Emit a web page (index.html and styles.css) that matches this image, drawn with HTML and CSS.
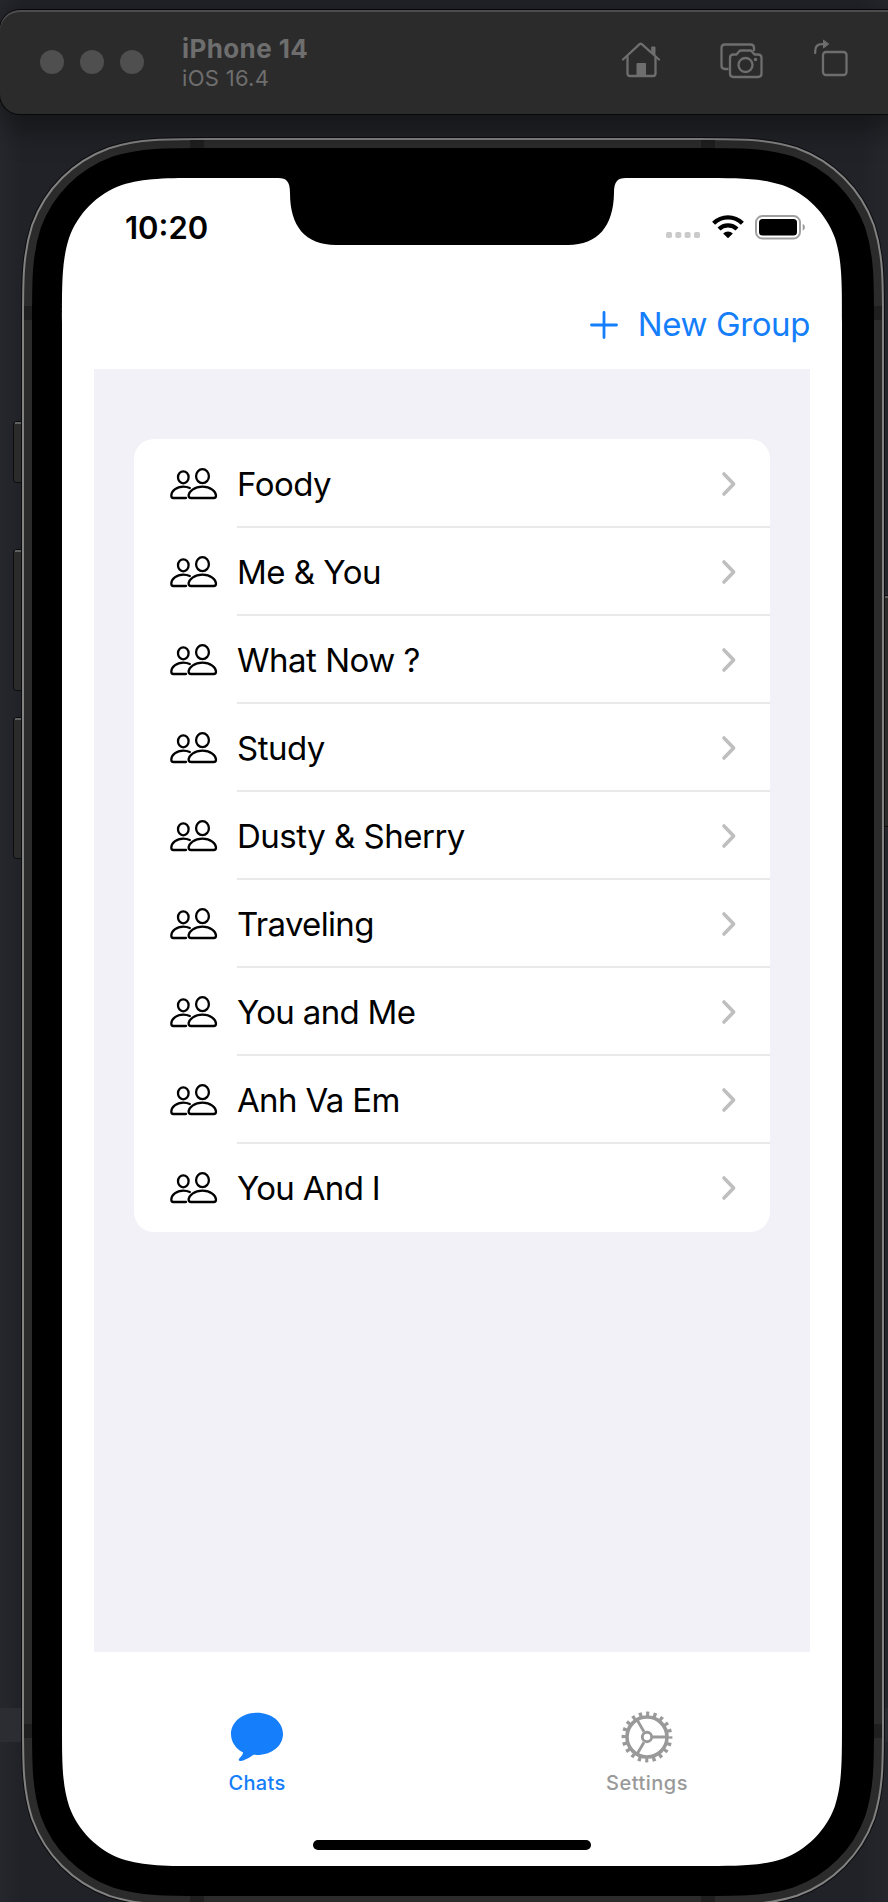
FILE: index.html
```html
<!DOCTYPE html>
<html lang="en">
<head>
<meta charset="utf-8">
<title>iPhone 14 – Chats</title>
<link rel="stylesheet" href="styles.css">
</head>
<body>
<svg class="defs" width="0" height="0" aria-hidden="true">
  <defs>
    <symbol id="people" viewBox="0 0 48 34">
      <g fill="none" stroke="#000" stroke-width="2.300" stroke-linecap="round" stroke-linejoin="round">
        <ellipse cx="13.300" cy="10.300" rx="5.300" ry="6"/>
        <ellipse cx="32.500" cy="9.200" rx="6.400" ry="7"/>
        <path d="M16 31H3.400C1.900 31 1.300 30.200 1.300 28.800C1.300 24 6.500 19.600 13.300 19.600C16 19.600 18 20.100 19.800 21"/>
        <path d="M21.200 31H43.800C45.400 31 46 30.200 46 28.800C46 24.500 40.500 19.600 32.500 19.600S18.600 24.500 18.600 28.800C18.600 30.200 19.600 31 21.200 31Z"/>
      </g>
    </symbol>
    <symbol id="chevron" viewBox="0 0 16 26">
      <path d="M3 3L12.600 13L3 23" fill="none" stroke="#bfbfbf" stroke-width="3.600" stroke-linecap="round" stroke-linejoin="round"/>
    </symbol>
  </defs>
</svg>

<header class="toolbar">
  <div class="lights"><i></i><i></i><i></i></div>
  <div class="titles">
    <h1 class="device-name">iPhone 14</h1>
    <p class="device-os">iOS 16.4</p>
  </div>
  <div class="tools">
    <svg class="home" width="40" height="36" viewBox="0 0 40 36" fill="none" stroke="#6e6e6e" stroke-width="2.300" stroke-linecap="round" stroke-linejoin="round">
      <path d="M2 17.500L18.600 2.200Q19.700 1.200 20.800 2.200L38 17.500"/>
      <path d="M6.500 15V31.500Q6.500 34 9 34H32Q34.500 34 34.500 31.500V15"/>
      <path d="M16 34V21.500H24.500V34Z" fill="#6e6e6e" stroke-width="1"/>
      <path d="M31 5H34V13L31 10Z" fill="#6e6e6e" stroke-width="1"/>
    </svg>
    <svg class="camera" width="44" height="36" viewBox="0 0 44 36" fill="none" stroke="#6e6e6e" stroke-width="2.300" stroke-linejoin="round">
      <path d="M9.500 26H6Q2.500 26 2.500 22.500V5Q2.500 1.500 6 1.500H31.500Q35 1.500 35 5V8"/>
      <path d="M14.500 11.500H17.500L20 8.500Q20.800 7.500 22 7.500H31Q32.200 7.500 33 8.500L35.500 11.500H39Q42.500 11.500 42.500 15V30.500Q42.500 34 39 34H14.500Q11 34 11 30.500V15Q11 11.500 14.500 11.500Z"/>
      <circle cx="26.500" cy="22" r="7"/>
      <circle cx="36.500" cy="16.500" r="1.700" fill="#6e6e6e" stroke="none"/>
    </svg>
    <svg class="rotate" width="36" height="38" viewBox="0 0 36 38" fill="none" stroke="#6e6e6e" stroke-width="2.300" stroke-linecap="round" stroke-linejoin="round">
      <rect x="10" y="13" width="23.500" height="23" rx="3"/>
      <path d="M2.200 14V12Q2.200 5.200 9 5.200H10.500"/>
      <path d="M10.500 1.500V9L15.500 5.200Z" fill="#6e6e6e" stroke-width="1"/>
    </svg>
  </div>
</header>

<main class="phone">
  <svg class="bezel" width="888" height="1902" viewBox="0 0 888 1902" aria-hidden="true">
    <defs>
      <path id="body" d="M62 322.800c0-41.700 0-62.500 7.100-85c8.900-24.500 28.200-43.800 52.700-52.700c22.400-7.100 43.300-7.100 85-7.100H699.200c41.700 0 62.500 0 85 7.100c24.500 8.900 43.800 28.200 52.700 52.700c7.100 22.400 7.100 43.300 7.100 85V1721.200c0 41.700 0 62.500-7.100 85c-8.900 24.500-28.200 43.800-52.700 52.700c-22.400 7.100-43.300 7.100-85 7.100H206.800c-41.700 0-62.500 0-85-7.100c-24.500-8.900-43.800-28.200-52.700-52.700c-7.100-22.400-7.100-43.300-7.100-85Z"/>
    </defs>
    <g fill="#2b2b2b" stroke="#0c0c0d">
      <rect x="13.500" y="421.500" width="14" height="61" rx="3"/>
      <rect x="13.500" y="549.500" width="14" height="141" rx="3"/>
      <rect x="13.500" y="717.500" width="14" height="141" rx="3"/>
      <rect x="878" y="595.500" width="14" height="231" rx="3"/>
    </g>
    <path d="M15 423H22M15 551H22M15 719H22M884 597H888" stroke="#606060" stroke-width="2"/>
    <use href="#body" stroke="#0e0e10" stroke-width="82"/>
    <use href="#body" stroke="#828282" stroke-width="80"/>
    <use href="#body" stroke="#2b2b2b" stroke-width="76"/>
    <path d="M190 140h14v9h-14zM701 140h14v9h-14zM24 306h9v14h-9zM873 306h9v14h-9zM24 1724h9v14h-9zM873 1724h9v14h-9zM190 1895h14v7h-14zM701 1895h14v7h-14z" fill="#1f1f1f"/>
    <use href="#body" stroke="#000" stroke-width="60"/>
    <path fill="#fff" d="M62 322.800c0-41.700 0-62.500 7.100-85c8.900-24.500 28.200-43.800 52.700-52.700c22.400-7.100 43.300-7.100 85-7.100H697.200c41.700 0 62.500 0 85 7.100c24.500 8.900 43.800 28.200 52.700 52.700c7.100 22.400 7.100 43.300 7.100 85V1721.200c0 41.700 0 62.500-7.100 85c-8.900 24.500-28.200 43.800-52.700 52.700c-22.400 7.100-43.300 7.100-85 7.100H206.800c-41.700 0-62.500 0-85-7.100c-24.500-8.900-43.800-28.200-52.700-52.700c-7.100-22.400-7.100-43.300-7.100-85Z"/>
    <path class="notch" d="M276 176V178H278C287 178 290 182 290 193C290 226 305 245 336 245H568C598 245 613.500 226 614 193C614 182 617 178 626 178V176Z"/>
  </svg>

  <div class="screen">
    <div class="status">
      <time class="clock">10:20</time>
      <div class="status-icons">
        <svg width="36" height="26" viewBox="0 0 36 26" fill="#cacaca"><rect x="1" y="18" width="6" height="6" rx="1.800"/><rect x="10.300" y="18" width="6" height="6" rx="1.800"/><rect x="19.600" y="18" width="6" height="6" rx="1.800"/><rect x="29" y="18" width="6" height="6" rx="1.800"/></svg>
        <svg width="34" height="26" viewBox="0 0 34 26" fill="none" stroke="#000" stroke-width="4.200"><path d="M2.600 9.300A20.400 20.400 0 0 1 31.400 9.300"/><path d="M8 15A12.800 12.800 0 0 1 26 15"/><path d="M17 24.300L12.100 19.500A7.200 7.200 0 0 1 21.900 19.500Z" fill="#000" stroke="none"/></svg>
        <svg width="52" height="26" viewBox="0 0 52 26"><rect x="1" y="2" width="44" height="22.500" rx="6.500" fill="none" stroke="#a0a0a0" stroke-width="2"/><rect x="4" y="5" width="38" height="16.500" rx="3.500"/><path d="M47.700 10C50.600 11 50.600 15.500 47.700 16.500Z" fill="#9b9b9b"/></svg>
      </div>
    </div>

    <button class="new-group">
      <svg width="28" height="28" viewBox="0 0 28 28" stroke="#147efb" stroke-width="2.800" stroke-linecap="round"><path d="M14 1.500V26.500M1.500 14H26.500"/></svg>
      <span class="new-group-label">New Group</span>
    </button>

    <section class="content">
      <ul class="groups">
        <li><svg class="people"><use href="#people"/></svg><span>Foody</span><svg class="chev"><use href="#chevron"/></svg></li>
        <li><svg class="people"><use href="#people"/></svg><span>Me &amp; You</span><svg class="chev"><use href="#chevron"/></svg></li>
        <li><svg class="people"><use href="#people"/></svg><span>What Now ?</span><svg class="chev"><use href="#chevron"/></svg></li>
        <li><svg class="people"><use href="#people"/></svg><span>Study</span><svg class="chev"><use href="#chevron"/></svg></li>
        <li><svg class="people"><use href="#people"/></svg><span>Dusty &amp; Sherry</span><svg class="chev"><use href="#chevron"/></svg></li>
        <li class="tight"><svg class="people"><use href="#people"/></svg><span>Traveling</span><svg class="chev"><use href="#chevron"/></svg></li>
        <li class="tight"><svg class="people"><use href="#people"/></svg><span>You and Me</span><svg class="chev"><use href="#chevron"/></svg></li>
        <li class="tight"><svg class="people"><use href="#people"/></svg><span>Anh Va Em</span><svg class="chev"><use href="#chevron"/></svg></li>
        <li class="tight"><svg class="people"><use href="#people"/></svg><span>You And I</span><svg class="chev"><use href="#chevron"/></svg></li>
      </ul>
    </section>

    <nav class="tabs">
      <a class="tab active">
        <svg width="54" height="54" viewBox="0 0 54 54" fill="#147efb"><path d="M27 2.800C41.500 2.800 53 12 53 24S41.500 45 27 45C25.800 45 24.600 44.900 23.500 44.800C18.500 48.300 14 50.900 10.500 50.900C8.600 50.900 8.200 49.500 9.500 48.200C11.300 46.500 12.900 44.300 13.100 42.500C5.900 38.800 1 32 1 24C1 12 12.500 2.800 27 2.800Z"/></svg>
        <span>Chats</span>
      </a>
      <a class="tab settings">
        <svg width="54" height="54" viewBox="-27 -27 54 54" fill="none" stroke="#999">
          <circle r="20" stroke-width="3.600"/>
          <circle r="23.200" stroke-width="4.400" stroke-dasharray="3.200 4.088" stroke-dashoffset="1.600"/>
          <circle r="4.700" stroke-width="2.900"/>
          <path d="M6 0H19M-3 -5.200L-9.700 -16.800M-3 5.200L-9.700 16.800" stroke-width="2.800"/>
        </svg>
        <span>Settings</span>
      </a>
    </nav>
    <div class="home-bar"></div>
  </div>
</main>
</body>
</html>
```

FILE: styles.css
```css
* { box-sizing: border-box; margin: 0; padding: 0; }

body {
  width: 888px;
  height: 1902px;
  overflow: hidden;
  position: relative;
  padding-top: 10px;
  font-family: Inter, "Liberation Sans", sans-serif;
  background:
    linear-gradient(#2c2d32, #2c2d32) 0 1708px / 888px 34px no-repeat,
    linear-gradient(90deg, #26272c, #212227 22px, #212227 860px, #26272c);
}

.defs { position: absolute; }

.toolbar {
  position: relative;
  width: 908px;
  height: 104px;
  padding: 0 59px 0 40px;
  display: flex;
  align-items: center;
  border-radius: 20px;
  background: #2b2b2b;
  box-shadow: 0 0 0 1px #08080a, inset 0 2px 0 #4c4c4c, 0 12px 30px 4px rgba(0, 0, 0, .35);
}

.lights { display: flex; gap: 16px; width: 142px; }
.lights i { width: 24px; height: 24px; border-radius: 50%; background: #4f4f4f; }

.titles { flex: 1; color: #6e6e6e; padding-bottom: 1px; }
.device-name { font-size: 26px; line-height: 32px; font-weight: 700; letter-spacing: .4px; }
.device-os { font-size: 22px; line-height: 26px; letter-spacing: .3px; }

.tools { display: flex; align-items: flex-start; align-self: flex-start; padding-top: 29px; }
.home { margin: 3px 58px 0 0; }
.camera { margin: 4px 50px 0 0; }

.phone { position: absolute; inset: 0; z-index: -1; }
.bezel { position: absolute; left: 0; top: 0; fill: none; }
.notch { fill: #000; }

.screen {
  position: relative;
  margin: 178px 46px 36px 62px;
  height: 1688px;
  display: flex;
  flex-direction: column;
}

.status {
  height: 99px;
  padding: 30px 35px 0 63px;
  display: flex;
  justify-content: space-between;
  align-items: flex-start;
}
.clock { font-size: 31px; line-height: 40px; font-weight: 600; }
.status-icons { display: flex; gap: 10px; padding-top: 6px; }

.new-group {
  height: 92px;
  padding: 2px 32px 0 0;
  border: 0;
  background: none;
  font: inherit;
  color: #147efb;
  display: flex;
  align-items: center;
  justify-content: flex-end;
  gap: 20px;
}
.new-group svg { margin-top: 1px; }
.new-group-label { font-size: 33px; line-height: 40px; letter-spacing: -.4px; }

.content {
  height: 1283px;
  margin: 0 32px;
  padding: 70px 40px;
  background: #f2f1f7;
}

.groups {
  list-style: none;
  padding-top: 1px;
  background: #fff;
  border-radius: 20px;
}
.groups li {
  height: 88px;
  padding: 0 33px 0 36px;
  display: flex;
  align-items: center;
  font-size: 33px;
  line-height: 40px;
  letter-spacing: -.5px;
  background: linear-gradient(#e9e9eb, #e9e9eb) 103px 86px / 100% 2px no-repeat;
}
.groups .tight { letter-spacing: -.67px; }
.groups li:last-child { background: none; }
.groups span { flex: 1; }
.people { width: 48px; height: 34px; margin-right: 19px; }
.chev { width: 16px; height: 26px; }

.tabs {
  height: 188px;
  padding-top: 58px;
  display: flex;
}
.tab {
  flex: 1;
  display: flex;
  flex-direction: column;
  align-items: center;
  gap: 7px;
  font-size: 20px;
  line-height: 24px;
  font-weight: 500;
  letter-spacing: .3px;
  color: #999;
}
.tab.active { color: #147efb; }
.tab.settings { letter-spacing: .5px; }

.home-bar {
  width: 278px;
  height: 10px;
  margin: 0 auto;
  border-radius: 5px;
  background: #000;
}
```
